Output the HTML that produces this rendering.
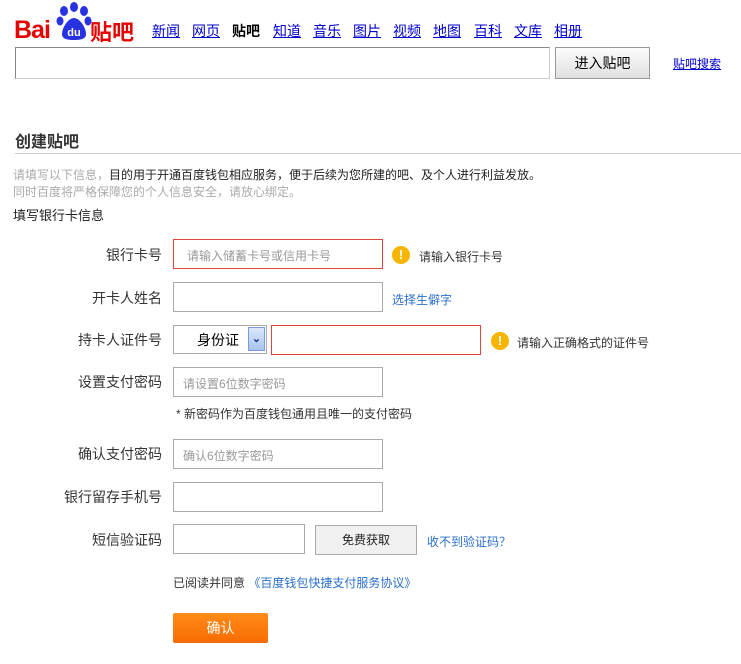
<!DOCTYPE html>
<html><head><meta charset="utf-8"><style>
*{margin:0;padding:0;box-sizing:border-box}
body{width:741px;height:664px;background:#fff;position:relative;font-family:"Liberation Sans","Noto Sans CJK SC",sans-serif;overflow:hidden;color:#333}
.a{position:absolute;white-space:nowrap}
.nav{font-size:14px;color:#00c;text-decoration:underline;top:21px}
.lbl{font-size:14px;color:#333;right:579px;text-align:right}
.inp{border:1px solid #aaa;height:30px;width:210px;left:173px}
.red{border-color:#e0443a}
.warn{width:18px;height:18px;border-radius:50%;background:#f7b500;color:#fff;font-weight:bold;font-size:13px;text-align:center;line-height:18px}
.blue{color:#2a6fcc}
</style></head><body>
<div class="a" style="left:14px;top:16px;font-size:25px;font-weight:bold;color:#e10602;letter-spacing:-1px">Bai</div>
<svg class="a" style="left:56px;top:1px" width="36" height="40" viewBox="0 0 36 40">
<ellipse cx="8" cy="10" rx="4" ry="5" fill="#2932e1"/><ellipse cx="18" cy="6" rx="4" ry="5" fill="#2932e1"/><ellipse cx="28" cy="10" rx="4" ry="5" fill="#2932e1"/><ellipse cx="4" cy="20" rx="3.5" ry="4.5" fill="#2932e1"/><ellipse cx="32" cy="20" rx="3.5" ry="4.5" fill="#2932e1"/>
<path d="M18 17c-6 0-12 10-12 16 0 5 5 6 12 6s12-1 12-6c0-6-6-16-12-16z" fill="#2932e1"/>
<text x="18" y="35" font-size="11" font-weight="bold" fill="#fff" text-anchor="middle" font-family="Liberation Sans">du</text></svg>
<div class="a" style="left:90px;top:15px;font-size:22px;font-weight:bold;color:#e10602">贴吧</div>
<a class="a nav" style="left:152px">新闻</a><a class="a nav" style="left:192px">网页</a><span class="a nav" style="left:232px;color:#000;text-decoration:none;font-weight:bold">贴吧</span><a class="a nav" style="left:273px">知道</a><a class="a nav" style="left:313px">音乐</a><a class="a nav" style="left:353px">图片</a><a class="a nav" style="left:393px">视频</a><a class="a nav" style="left:433px">地图</a><a class="a nav" style="left:474px">百科</a><a class="a nav" style="left:514px">文库</a><a class="a nav" style="left:554px">相册</a>
<div class="a" style="left:15px;top:47px;width:535px;height:32px;border:1px solid #999;border-color:#888 #ccc #ccc #888"></div>
<div class="a" style="left:555px;top:47px;width:95px;height:32px;border:1px solid #999;background:linear-gradient(#fcfcfc,#e0e0e0);font-size:14px;text-align:center;line-height:30px;color:#000">进入贴吧</div>
<a class="a" style="left:673px;top:55px;font-size:12px;color:#00c;text-decoration:underline">贴吧搜索</a>
<div class="a" style="left:15px;top:128px;font-size:16px;font-weight:bold;color:#333">创建贴吧</div>
<div class="a" style="left:15px;top:153px;width:726px;height:1px;background:#ccc"></div>
<div class="a" style="left:13px;top:166px;font-size:12px;color:#aaa">请填写以下信息，<span style="color:#222">目的用于开通百度钱包相应服务，便于后续为您所建的吧、及个人进行利益发放。</span></div>
<div class="a" style="left:13px;top:183px;font-size:12px;color:#aaa">同时百度将严格保障您的个人信息安全，请放心绑定。</div>
<div class="a" style="left:13px;top:205px;font-size:13px;color:#222">填写银行卡信息</div>

<div class="a lbl" style="top:245px">银行卡号</div>
<div class="a inp red" style="top:239px;font-size:12px;color:#999;padding:7px 13px">请输入储蓄卡号或信用卡号</div>
<div class="a warn" style="left:392px;top:246px">!</div>
<div class="a" style="left:419px;top:248px;font-size:12px">请输入银行卡号</div>

<div class="a lbl" style="top:288px">开卡人姓名</div>
<div class="a inp" style="top:282px"></div>
<div class="a blue" style="left:392px;top:291px;font-size:12px">选择生僻字</div>

<div class="a lbl" style="top:330px">持卡人证件号</div>
<div class="a" style="left:173px;top:325px;width:94px;height:29px;border:1px solid #aaa;font-size:14px;color:#000;padding:4px 0 0 23px">身份证</div>
<div class="a" style="left:248px;top:327px;width:17px;height:24px;border:1px solid #7a9cd3;background:linear-gradient(#dbe7fb,#a9c3ee);color:#1b3a8a;font-size:11px;text-align:center;line-height:22px;font-weight:bold">⌄</div>
<div class="a inp red" style="top:325px;left:271px;width:210px"></div>
<div class="a warn" style="left:491px;top:332px">!</div>
<div class="a" style="left:517px;top:334px;font-size:12px">请输入正确格式的证件号</div>

<div class="a lbl" style="top:372px">设置支付密码</div>
<div class="a inp" style="top:367px;font-size:12px;color:#999;padding:7px 9px">请设置6位数字密码</div>
<div class="a" style="left:176px;top:405px;font-size:12px">* 新密码作为百度钱包通用且唯一的支付密码</div>

<div class="a lbl" style="top:444px">确认支付密码</div>
<div class="a inp" style="top:439px;font-size:12px;color:#999;padding:7px 9px">确认6位数字密码</div>

<div class="a lbl" style="top:487px">银行留存手机号</div>
<div class="a inp" style="top:482px"></div>

<div class="a lbl" style="top:530px">短信验证码</div>
<div class="a inp" style="top:524px;width:132px"></div>
<div class="a" style="left:315px;top:525px;width:102px;height:30px;border:1px solid #aaa;background:#f0f0f0;font-size:12px;color:#222;text-align:center;line-height:28px">免费获取</div>
<div class="a blue" style="left:427px;top:533px;font-size:12px">收不到验证码？</div>

<div class="a" style="left:173px;top:574px;font-size:12px">已阅读并同意 <span class="blue">《百度钱包快捷支付服务协议》</span></div>
<div class="a" style="left:173px;top:613px;width:95px;height:30px;border-radius:2px;background:linear-gradient(#ff8c1a,#f86b00);color:#fff;font-size:14px;text-align:center;line-height:30px">确认</div>
</body></html>
